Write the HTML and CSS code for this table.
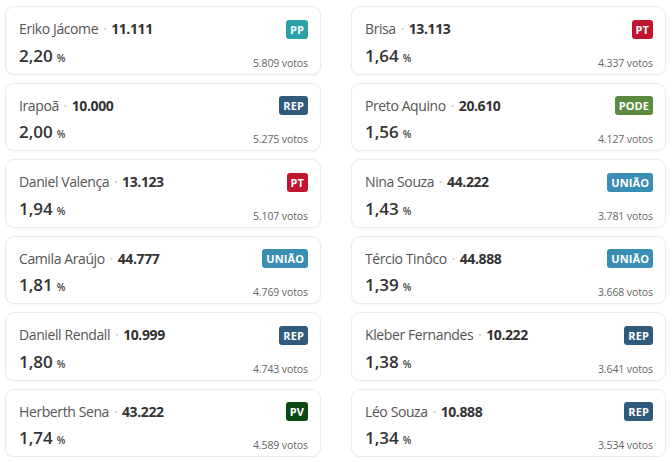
FILE: index.html
```html
<!DOCTYPE html>
<html lang="pt-BR">
<head>
<meta charset="utf-8">
<link rel="stylesheet" href="styles.css">
</head>
<body>
<div class="grid">
  <div class="card"><div class="top"><div class="who"><span class="name">Eriko Jácome</span><span class="dot">•</span><span class="num">11.111</span></div><span class="badge pp">PP</span></div><div class="bottom"><span class="pct">2,20<small>%</small></span><span class="votes">5.809 votos</span></div></div>
  <div class="card"><div class="top"><div class="who"><span class="name">Brisa</span><span class="dot">•</span><span class="num">13.113</span></div><span class="badge pt">PT</span></div><div class="bottom"><span class="pct">1,64<small>%</small></span><span class="votes">4.337 votos</span></div></div>
  <div class="card"><div class="top"><div class="who"><span class="name">Irapoã</span><span class="dot">•</span><span class="num">10.000</span></div><span class="badge rep">REP</span></div><div class="bottom"><span class="pct">2,00<small>%</small></span><span class="votes">5.275 votos</span></div></div>
  <div class="card"><div class="top"><div class="who"><span class="name">Preto Aquino</span><span class="dot">•</span><span class="num">20.610</span></div><span class="badge pode">PODE</span></div><div class="bottom"><span class="pct">1,56<small>%</small></span><span class="votes">4.127 votos</span></div></div>
  <div class="card"><div class="top"><div class="who"><span class="name">Daniel Valença</span><span class="dot">•</span><span class="num">13.123</span></div><span class="badge pt">PT</span></div><div class="bottom"><span class="pct">1,94<small>%</small></span><span class="votes">5.107 votos</span></div></div>
  <div class="card"><div class="top"><div class="who"><span class="name">Nina Souza</span><span class="dot">•</span><span class="num">44.222</span></div><span class="badge uniao">UNIÃO</span></div><div class="bottom"><span class="pct">1,43<small>%</small></span><span class="votes">3.781 votos</span></div></div>
  <div class="card"><div class="top"><div class="who"><span class="name">Camila Araújo</span><span class="dot">•</span><span class="num">44.777</span></div><span class="badge uniao">UNIÃO</span></div><div class="bottom"><span class="pct">1,81<small>%</small></span><span class="votes">4.769 votos</span></div></div>
  <div class="card"><div class="top"><div class="who"><span class="name">Tércio Tinôco</span><span class="dot">•</span><span class="num">44.888</span></div><span class="badge uniao">UNIÃO</span></div><div class="bottom"><span class="pct">1,39<small>%</small></span><span class="votes">3.668 votos</span></div></div>
  <div class="card"><div class="top"><div class="who"><span class="name">Daniell Rendall</span><span class="dot">•</span><span class="num">10.999</span></div><span class="badge rep">REP</span></div><div class="bottom"><span class="pct">1,80<small>%</small></span><span class="votes">4.743 votos</span></div></div>
  <div class="card"><div class="top"><div class="who"><span class="name">Kleber Fernandes</span><span class="dot">•</span><span class="num">10.222</span></div><span class="badge rep">REP</span></div><div class="bottom"><span class="pct">1,38<small>%</small></span><span class="votes">3.641 votos</span></div></div>
  <div class="card"><div class="top"><div class="who"><span class="name">Herberth Sena</span><span class="dot">•</span><span class="num">43.222</span></div><span class="badge pv">PV</span></div><div class="bottom"><span class="pct">1,74<small>%</small></span><span class="votes">4.589 votos</span></div></div>
  <div class="card"><div class="top"><div class="who"><span class="name">Léo Souza</span><span class="dot">•</span><span class="num">10.888</span></div><span class="badge rep">REP</span></div><div class="bottom"><span class="pct">1,34<small>%</small></span><span class="votes">3.534 votos</span></div></div>
</div>
</body>
</html>
```
FILE: styles.css
```css
html, body { margin: 0; padding: 0; background: #fff; }
body { font-family: "Open Sans", "Noto Sans", sans-serif; color: #333; }
.grid {
  display: grid;
  grid-template-columns: 316px 315px;
  column-gap: 30px;
  row-gap: 8px;
  padding: 6px 0 0 5px;
}
.card {
  box-sizing: border-box;
  height: 68.5px;
  border: 1px solid #ececec;
  border-radius: 9px;
  box-shadow: 0 1px 2px rgba(0,0,0,0.04);
  padding: 12px 12px 0 13px;
  background: #fff;
}
.top {
  display: flex;
  justify-content: space-between;
  align-items: center;
  height: 20px;
}
.who { display: flex; align-items: center; font-size: 14px; line-height: 20px; letter-spacing: -0.4px; }
.name { color: #555; }
.dot { color: #d0d0d0; font-size: 9px; margin: 0 5px; }
.num { color: #333; font-weight: 700; }
.badge {
  color: #fff;
  font-size: 11px;
  font-weight: 700;
  line-height: 19px;
  height: 19px;
  padding: 0 4px;
  border-radius: 3px;
  letter-spacing: 0.1px;
}
.pp { background: #2aa1a7; }
.pt { background: #c1152f; }
.rep { background: #2f5a7c; }
.pode { background: #5c8b3f; }
.uniao { background: #3a8db3; }
.pv { background: #0e4a10; }
.bottom {
  display: flex;
  justify-content: space-between;
  align-items: flex-end;
  margin-top: 8.5px;
  height: 20px;
}
.pct { font-size: 17px; font-weight: 600; line-height: 20px; color: #333; }
.pct small { font-size: 10px; font-weight: 600; margin-left: 4px; color: #444; }
.votes { font-size: 10.5px; line-height: 14px; color: #666; margin-bottom: -2px; letter-spacing: -0.1px; }
```
